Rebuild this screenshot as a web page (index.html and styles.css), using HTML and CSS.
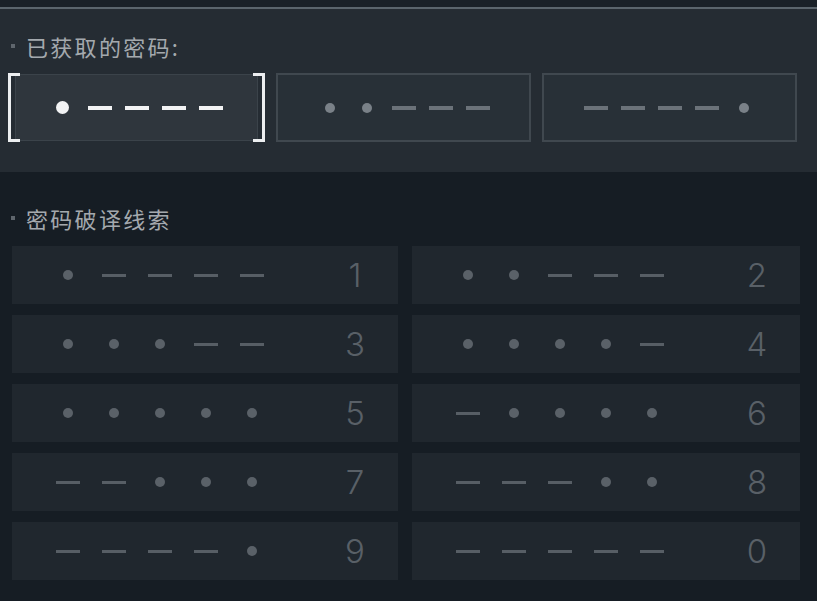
FILE: index.html
```html
<!DOCTYPE html>
<html lang="zh-CN">
<head>
<meta charset="utf-8">
<title>密码破译</title>
<link rel="stylesheet" href="styles.css">
</head>
<body>
<div class="topbar"></div>

<section class="acquired">
  <h2 class="label">已获取的密码:</h2>
  <div class="codes">
    <div class="code code-active">
      <span class="dot"></span><span class="dash"></span><span class="dash"></span><span class="dash"></span><span class="dash"></span>
    </div>
    <div class="code">
      <span class="dot"></span><span class="dot"></span><span class="dash"></span><span class="dash"></span><span class="dash"></span>
    </div>
    <div class="code">
      <span class="dash"></span><span class="dash"></span><span class="dash"></span><span class="dash"></span><span class="dot"></span>
    </div>
  </div>
</section>

<section class="clues">
  <h2 class="label">密码破译线索</h2>
  <div class="clue-grid">
    <div class="clue"><div class="seq"><span class="dot"></span><span class="dash"></span><span class="dash"></span><span class="dash"></span><span class="dash"></span></div><span class="num">1</span></div>
    <div class="clue"><div class="seq"><span class="dot"></span><span class="dot"></span><span class="dash"></span><span class="dash"></span><span class="dash"></span></div><span class="num">2</span></div>
    <div class="clue"><div class="seq"><span class="dot"></span><span class="dot"></span><span class="dot"></span><span class="dash"></span><span class="dash"></span></div><span class="num">3</span></div>
    <div class="clue"><div class="seq"><span class="dot"></span><span class="dot"></span><span class="dot"></span><span class="dot"></span><span class="dash"></span></div><span class="num">4</span></div>
    <div class="clue"><div class="seq"><span class="dot"></span><span class="dot"></span><span class="dot"></span><span class="dot"></span><span class="dot"></span></div><span class="num">5</span></div>
    <div class="clue"><div class="seq"><span class="dash"></span><span class="dot"></span><span class="dot"></span><span class="dot"></span><span class="dot"></span></div><span class="num">6</span></div>
    <div class="clue"><div class="seq"><span class="dash"></span><span class="dash"></span><span class="dot"></span><span class="dot"></span><span class="dot"></span></div><span class="num">7</span></div>
    <div class="clue"><div class="seq"><span class="dash"></span><span class="dash"></span><span class="dash"></span><span class="dot"></span><span class="dot"></span></div><span class="num">8</span></div>
    <div class="clue"><div class="seq"><span class="dash"></span><span class="dash"></span><span class="dash"></span><span class="dash"></span><span class="dot"></span></div><span class="num">9</span></div>
    <div class="clue"><div class="seq"><span class="dash"></span><span class="dash"></span><span class="dash"></span><span class="dash"></span><span class="dash"></span></div><span class="num">0</span></div>
  </div>
</section>
</body>
</html>
```

FILE: styles.css
```css
* {
  box-sizing: border-box;
}

html,
body {
  margin: 0;
  padding: 0;
}

body {
  width: 817px;
  height: 601px;
  overflow: hidden;
  background: #161d24;
  font-family: "Noto Sans CJK SC", "Noto Sans", sans-serif;
}

/* thin header strip with a lit edge */
.topbar {
  height: 9px;
  background: #1a2128;
  border-bottom: 2px solid #5b656d;
}

.label {
  display: flex;
  align-items: center;
  margin: 0;
  height: 24px;
  font-size: 22px;
  font-weight: 400;
  line-height: 24px;
  color: #a4a9ae;
  letter-spacing: 2.3px;
}

.label::before {
  content: "";
  width: 4px;
  height: 4px;
  margin: 0 11px 0 11px;
  background: #5f666d;
}

/* ---------- acquired codes ---------- */
.acquired {
  height: 163px;
  padding: 25px 0 0 0;
  background: #252c33;
}

.codes {
  display: grid;
  grid-template-columns: 257px 255px 255px;
  gap: 11px;
  margin-top: 15px;
  padding-left: 8px;
}

.code {
  display: flex;
  align-items: center;
  justify-content: center;
  height: 69px;
  border: 2px solid #40484f;
  background: #283037;
}

.code .dot,
.code .dash {
  margin: 0 6.5px;
}

.code .dot {
  width: 10px;
  height: 10px;
  margin: 0 13.5px;
  border-radius: 50%;
  background: #7a8188;
}

.code .dash {
  width: 24px;
  height: 4px;
  background: #6b7279;
}

/* the selected code: brighter fill framed by white brackets */
.code-active {
  position: relative;
  border: none;
  background: transparent;
}

.code-active::before {
  content: "";
  position: absolute;
  inset: 1px 7px 1px 7px;
  background: #2f363d;
  border: 1px solid #3b434a;
}

.code-active::after {
  content: "";
  position: absolute;
  inset: 0;
  background:
    linear-gradient(#eceef0, #eceef0) left top / 3px 100% no-repeat,
    linear-gradient(#eceef0, #eceef0) left top / 12px 3px no-repeat,
    linear-gradient(#eceef0, #eceef0) left bottom / 12px 3px no-repeat,
    linear-gradient(#eceef0, #eceef0) right top / 3px 100% no-repeat,
    linear-gradient(#eceef0, #eceef0) right top / 12px 3px no-repeat,
    linear-gradient(#eceef0, #eceef0) right bottom / 12px 3px no-repeat;
}

.code-active .dot,
.code-active .dash {
  position: relative;
  z-index: 1;
  background: #f2f3f4;
}

.code-active .dot {
  width: 13px;
  height: 13px;
  margin: 0 12px;
}

/* ---------- clue list ---------- */
.clues {
  padding-top: 34px;
}

.clue-grid {
  display: grid;
  grid-template-columns: 386px 388px;
  grid-auto-rows: 58px;
  column-gap: 14px;
  row-gap: 11px;
  margin-top: 16px;
  padding-left: 12px;
}

.clue {
  display: flex;
  align-items: center;
  padding-left: 33px;
  background: #20272e;
}

.seq {
  display: flex;
  align-items: center;
}

.seq .dot,
.seq .dash {
  margin: 0 11px;
}

.seq .dot {
  width: 10px;
  height: 10px;
  margin: 0 18px;
  border-radius: 50%;
  background: #5a6168;
}

.seq .dash {
  width: 24px;
  height: 3px;
  background: #575e65;
}

.num {
  width: 60px;
  margin-left: auto;
  margin-right: 13px;
  text-align: center;
  font-family: Inter, "Liberation Sans", sans-serif;
  font-weight: 300;
  font-size: 33px;
  line-height: 1;
  color: #596067;
}
```
